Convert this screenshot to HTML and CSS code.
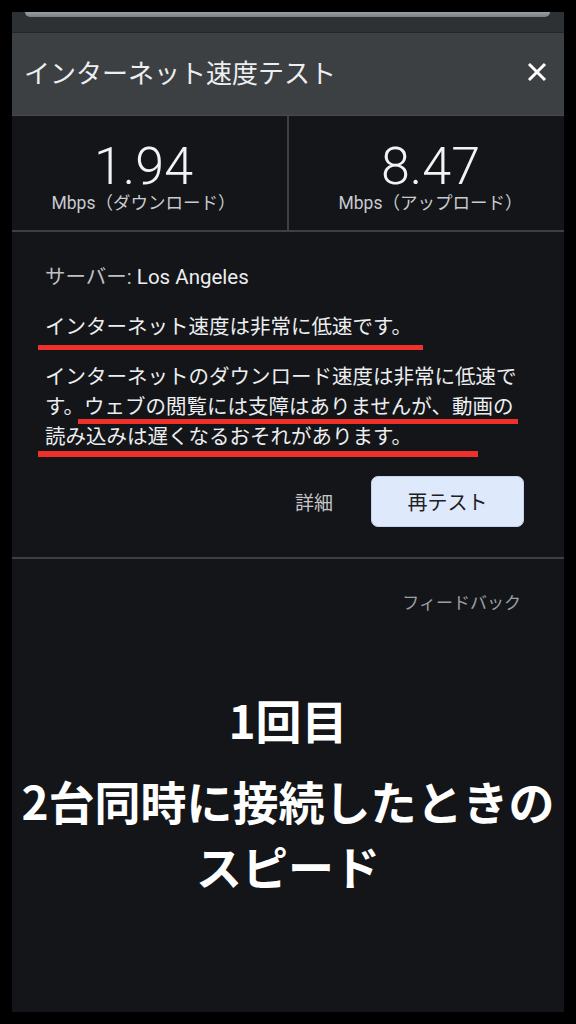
FILE: index.html
```html
<!DOCTYPE html>
<html lang="ja">
<head>
<meta charset="utf-8">
<title>インターネット速度テスト</title>
<link rel="stylesheet" href="styles.css">
</head>
<body>
<div class="frame">
  <div class="topstrip"><div class="urlbar"></div></div>
  <header class="header">
    <h1 class="title">インターネット速度テスト</h1>
    <svg class="close" width="20" height="20" viewBox="0 0 20 20"><path d="M2 2 L18 18 M18 2 L2 18" stroke="#ffffff" stroke-width="3" fill="none"/></svg>
  </header>
  <section class="speeds">
    <div class="speed speed-left">
      <div class="num">1.94</div>
      <div class="unit">Mbps（ダウンロード）</div>
    </div>
    <div class="vdiv"></div>
    <div class="speed speed-right">
      <div class="num">8.47</div>
      <div class="unit">Mbps（アップロード）</div>
    </div>
  </section>
  <section class="info">
    <p class="server"><span class="label">サーバー: </span><span class="city">Los Angeles</span></p>
    <div class="annotated">
      <p class="status">インターネット速度は非常に低速です。</p>
      <p class="desc">インターネットのダウンロード速度は非常に低速で<br>す。ウェブの閲覧には支障はありませんが、動画の<br>読み込みは遅くなるおそれがあります。</p>
      <span class="mark mark1"></span>
      <span class="mark mark2"></span>
      <span class="mark mark3"></span>
    </div>
    <div class="actions">
      <span class="details">詳細</span>
      <button class="retest">再テスト</button>
    </div>
  </section>
  <div class="feedback-row"><span class="feedback">フィードバック</span></div>
  <div class="caption">
    <p class="cap1">1回目</p>
    <p class="cap2">2台同時に接続したときの<br>スピード</p>
  </div>
</div>
</body>
</html>
```

FILE: styles.css
```css
html, body {
  margin: 0;
  padding: 0;
  background: #000000;
}
body {
  font-family: Roboto, "Noto Sans CJK JP", sans-serif;
  color: #e8eaed;
}
.frame {
  margin: 12px 12px 0 12px;
  height: 1000px;
  background: #141518;
  display: flex;
  flex-direction: column;
  overflow: hidden;
}
.topstrip {
  height: 20px;
  background: #2e3134;
  border-bottom: 1px solid #232527;
  padding: 0 14px 0 13px;
}
.urlbar {
  height: 5px;
  background: linear-gradient(#9a9da1, #7d8185);
  border-radius: 0 0 14px 14px;
}
.header {
  height: 82px;
  background: #3c4043;
  border-bottom: 1px solid #46494c;
  display: flex;
  align-items: center;
  justify-content: space-between;
  padding: 0 17px 0 12px;
}
.title {
  margin: 0;
  font-family: "Noto Sans CJK JP", sans-serif;
  font-weight: 400;
  font-size: 26px;
  line-height: 34px;
  color: #eceef0;
  margin-top: -4px;
}
.close {
  display: block;
  margin-top: -4px;
}
.speeds {
  height: 114px;
  display: grid;
  grid-template-columns: 1fr 2px 1fr;
  border-bottom: 2px solid #3c4043;
}
.vdiv {
  background: #3c4043;
}
.speed {
  display: flex;
  flex-direction: column;
  align-items: center;
  padding-top: 25px;
}
.speed-left {
  padding-right: 12px;
}
.speed-right {
  padding-left: 8px;
}
.num {
  font-family: Roboto, sans-serif;
  font-weight: 300;
  font-size: 52px;
  line-height: 52px;
  color: #f1f3f4;
}
.unit {
  font-size: 17.5px;
  line-height: 18px;
  color: #c8cbcf;
  margin-top: 1px;
}
.info {
  padding: 30px 40px 30px 33px;
  border-bottom: 2px solid #3c4043;
}
.info p {
  margin: 0;
  font-size: 20.5px;
  line-height: 30px;
}
.server .label {
  color: #bdc1c6;
}
.server .city {
  color: #eceef0;
}
.annotated {
  position: relative;
  margin-top: 20px;
}
.status {
  color: #eceef0;
}
.desc {
  margin-top: 20px !important;
  color: #eceef0;
}
.mark {
  position: absolute;
  height: 5px;
  background: #f0302b;
}
.mark1 { left: -7px; top: 33px; width: 385px; }
.mark2 { left: 33px; top: 107px; width: 440px; }
.mark3 { left: -7px; top: 139px; width: 440px; height: 6px; }
.actions {
  margin-top: 24px;
  display: flex;
  justify-content: flex-end;
  align-items: center;
  gap: 38px;
}
.details {
  font-family: "Noto Sans CJK JP", sans-serif;
  font-size: 19px;
  color: #c4c7ca;
}
.retest {
  width: 153px;
  height: 51px;
  background: #dfe9fc;
  border: 1px solid #c6d3ea;
  border-radius: 7px;
  font-family: "Noto Sans CJK JP", sans-serif;
  font-size: 20px;
  color: #1f2022;
  padding: 0;
}
.feedback-row {
  display: flex;
  justify-content: flex-end;
  padding: 31px 43px 0 0;
}
.feedback {
  font-family: "Noto Sans CJK JP", sans-serif;
  font-size: 17px;
  line-height: 24px;
  color: #9aa0a6;
}
.caption {
  margin-top: 73px;
  text-align: center;
  font-family: "Noto Sans CJK JP", sans-serif;
  font-weight: 700;
  color: #ffffff;
}
.caption p {
  margin: 0;
  font-size: 46px;
  line-height: 65px;
}
.cap2 {
  margin-top: 16px !important;
}
```
